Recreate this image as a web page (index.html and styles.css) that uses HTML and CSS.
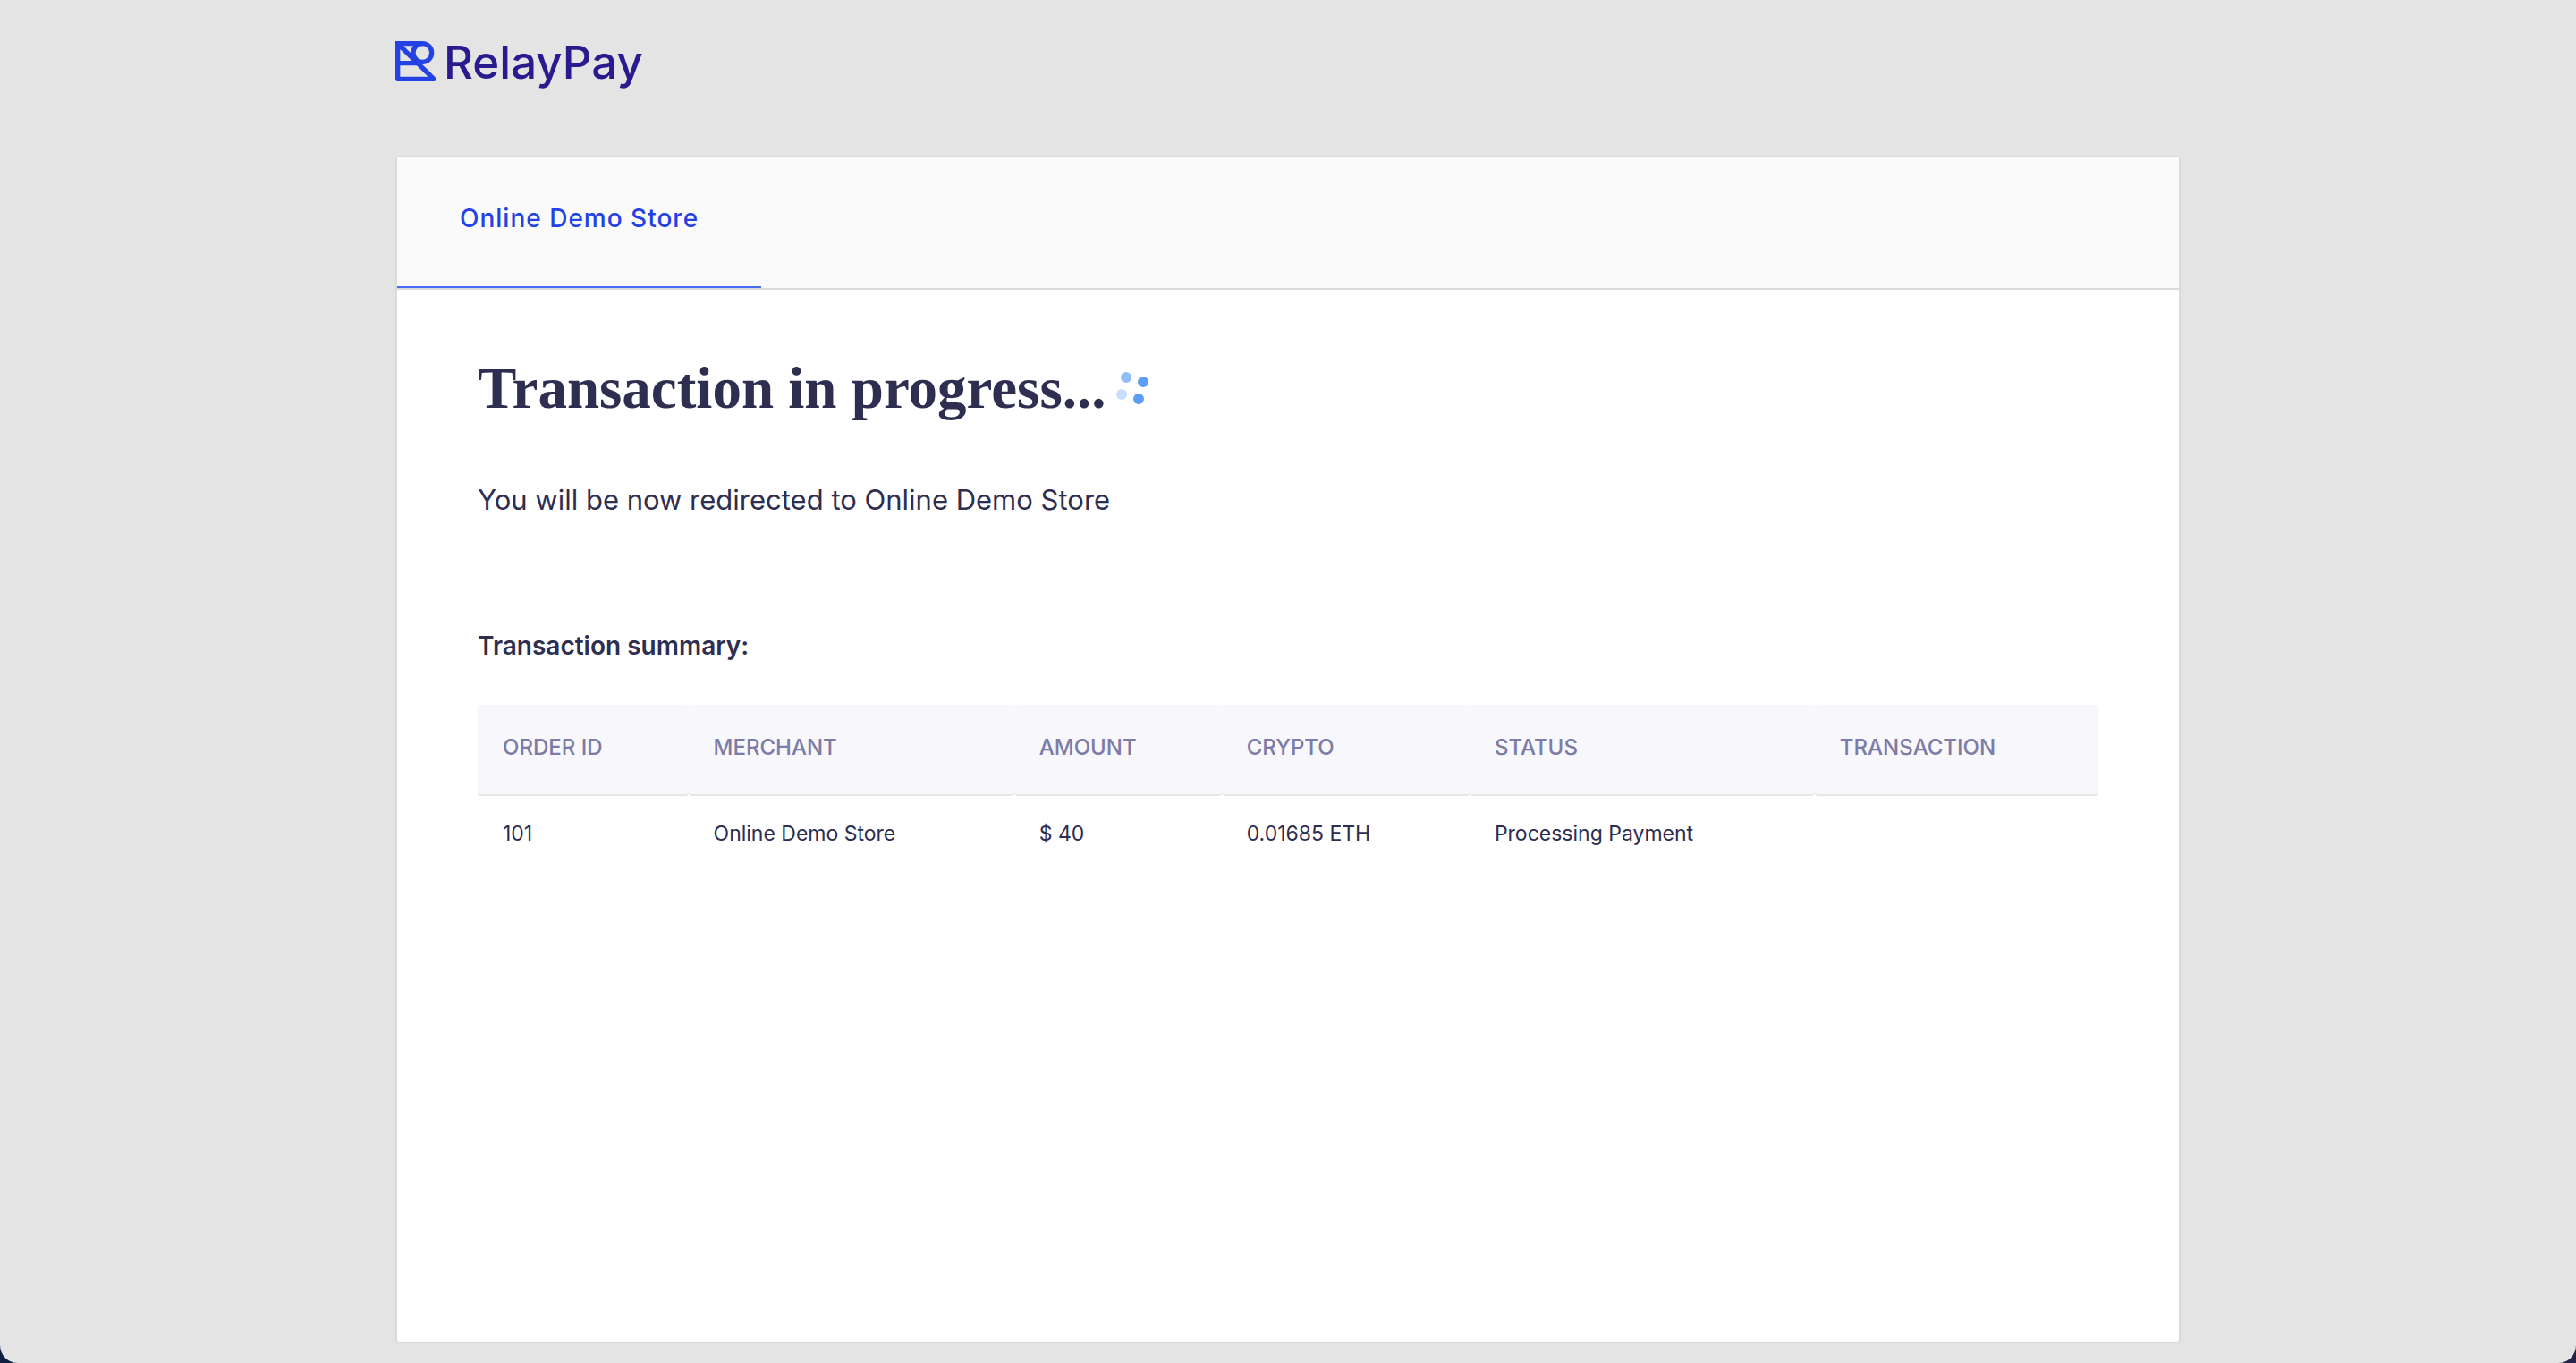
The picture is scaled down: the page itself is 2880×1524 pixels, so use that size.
FILE: index.html
```html
<!DOCTYPE html>
<html lang="en">
<head>
  <meta charset="utf-8">
  <meta name="viewport" content="width=device-width, initial-scale=1">
  <title>RelayPay</title>
  <link rel="stylesheet" href="styles.css">
</head>
<body>
  <div class="page">
    <header class="masthead">
      <a class="brand" href="#">
        <svg class="brand-mark" viewBox="0 0 138 135" fill="none" stroke="currentColor" stroke-width="16" aria-hidden="true">
          <path d="M91 8H8v119h121L12 12M8 74h83" stroke-linejoin="round"/>
          <path d="M0 0h20v20H0z" fill="currentColor" stroke="none"/>
          <circle cx="91" cy="39" r="31"/>
        </svg>
        <span class="brand-name">RelayPay</span>
      </a>
    </header>

    <main class="card">
      <nav class="tabs">
        <a class="tab" href="#" aria-current="page">Online Demo Store</a>
      </nav>
      <div class="content">
        <h1 class="title">
          Transaction in progress...
          <svg class="spinner" viewBox="0 0 40 40" fill="#5c9dfa" aria-hidden="true">
            <circle cx="13" cy="8" r="6" opacity=".68"/>
            <circle cx="32" cy="13" r="6"/>
            <circle cx="27" cy="32" r="6"/>
            <circle cx="8" cy="27" r="6" opacity=".34"/>
          </svg>
        </h1>
        <p class="message">You will be now redirected to Online Demo Store</p>
        <h2 class="subtitle" id="summary">Transaction summary:</h2>
        <table class="summary" aria-labelledby="summary">
          <colgroup>
            <col class="col-order"><col class="col-merchant"><col class="col-amount">
            <col class="col-crypto"><col class="col-status"><col>
          </colgroup>
          <thead>
            <tr>
              <th scope="col">ORDER ID</th>
              <th scope="col">MERCHANT</th>
              <th scope="col">AMOUNT</th>
              <th scope="col">CRYPTO</th>
              <th scope="col">STATUS</th>
              <th scope="col">TRANSACTION</th>
            </tr>
          </thead>
          <tbody>
            <tr>
              <td>101</td>
              <td>Online Demo Store</td>
              <td>$ 40</td>
              <td>0.01685 ETH</td>
              <td>Processing Payment</td>
              <td></td>
            </tr>
          </tbody>
        </table>
      </div>
    </main>
  </div>
</body>
</html>
```
FILE: styles.css
```css
* {
  box-sizing: border-box;
}

html {
  background: linear-gradient(90deg, #0c2140, #26234a);
}

body {
  margin: 0;
  color: #2e2e50;
  font-family: Inter, "Liberation Sans", sans-serif;
  font-size: 23px;
}

.page {
  display: flex;
  flex-direction: column;
  min-height: 100vh;
  padding: 46px 24px 22px;
  background: #e4e4e4;
  border-radius: 0 0 20px 20px;
}

.masthead,
.card {
  width: 100%;
  max-width: 1996px;
  margin: 0 auto;
}

.masthead {
  display: flex;
  padding-bottom: 80px;
}

.brand {
  display: flex;
  align-items: flex-start;
  gap: 8px;
  color: #2442e4;
  text-decoration: none;
}

.brand-mark {
  width: 46px;
  height: 45px;
}

.brand-name {
  color: #2a1a8f;
  font-size: 51px;
  font-weight: 500;
  line-height: 48px;
}

.card {
  flex: 1;
  background: #fff;
  border: 2px solid #dadada;
  border-radius: 4px;
}

.tabs {
  display: flex;
  background: #fafafa;
  border-bottom: 2px solid #dadada;
}

.tab {
  padding: 48px 70px 56px;
  border-bottom: 2px solid #4a6cf5;
  color: #2442e4;
  font-size: 28px;
  font-weight: 500;
  line-height: 40px;
  letter-spacing: 1px;
  text-decoration: none;
}

.content {
  padding: 70px 90px;
}

.title {
  display: flex;
  align-items: center;
  gap: 10px;
  margin: 0 0 65px;
  font-family: "Liberation Serif", serif;
  font-size: 65px;
  font-weight: 700;
  line-height: 80px;
}

.spinner {
  width: 40px;
  height: 40px;
}

.message {
  margin: 0 0 123px;
  font-size: 31px;
  line-height: 40px;
}

.subtitle {
  margin: 0 0 46px;
  font-size: 28px;
  font-weight: 600;
  line-height: 40px;
}

.summary {
  width: 100%;
  table-layout: fixed;
  border-collapse: separate;
  border-spacing: 0;
  text-align: left;
}

.col-order { width: 13%; }
.col-merchant { width: 20.1%; }
.col-amount { width: 12.8%; }
.col-crypto { width: 15.3%; }
.col-status { width: 21.3%; }

.summary th {
  padding: 32px 28px 36px;
  background: #f7f7fc;
  border-bottom: 2px solid #e6e6e6;
  border-radius: 4px;
  color: #7c7ca6;
  font-size: 24px;
  font-weight: 500;
  line-height: 32px;
}

.summary td {
  padding: 24px 28px;
  line-height: 36px;
}
```
